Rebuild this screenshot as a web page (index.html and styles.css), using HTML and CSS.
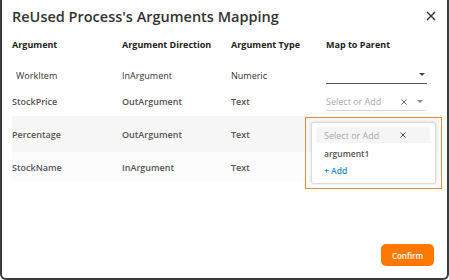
FILE: index.html
```html
<!DOCTYPE html>
<html lang="en">
<head>
  <meta charset="UTF-8" />
  <title>Arguments Mapping</title>
  <link rel="stylesheet" href="styles.css">
</head>
<body>

  <div class="dialog">
    <div class="dialog-header">
      <h2>ReUsed Process's Arguments Mapping</h2>
      <svg class="close" width="10" height="10" viewBox="0 0 10 10">
        <path d="M1 1 L9 9 M9 1 L1 9" stroke="#333" stroke-width="1.4" fill="none"/>
      </svg>
    </div>

    <div class="grid">
      <div class="row head">
        <div>Argument</div>
        <div>Argument Direction</div>
        <div>Argument Type</div>
        <div>Map to Parent</div>
      </div>

      <div class="row first">
        <div class="indent">WorkItem</div>
        <div>InArgument</div>
        <div>Numeric</div>
        <div>
          <div class="select dark">
            <span class="value"></span>
            <span class="caret"></span>
          </div>
        </div>
      </div>

      <div class="row small">
        <div>StockPrice</div>
        <div>OutArgument</div>
        <div>Text</div>
        <div>
          <div class="select">
            <span class="value placeholder">Select or Add</span>
            <svg class="clear" width="6" height="6" viewBox="0 0 6 6">
              <path d="M0.5 0.5 L5.5 5.5 M5.5 0.5 L0.5 5.5" stroke="#666" stroke-width="1" fill="none"/>
            </svg>
            <span class="caret light-caret"></span>
          </div>
        </div>
      </div>

      <div class="row small shaded">
        <div>Percentage</div>
        <div>OutArgument</div>
        <div>Text</div>
        <div></div>
      </div>

      <div class="row small light">
        <div>StockName</div>
        <div>InArgument</div>
        <div>Text</div>
        <div></div>
      </div>
    </div>

    <div class="dropdown">
      <div class="menu">
        <div class="search">
          <span>Select or Add</span>
          <svg width="6" height="6" viewBox="0 0 6 6">
            <path d="M0.5 0.5 L5.5 5.5 M5.5 0.5 L0.5 5.5" stroke="#555" stroke-width="1" fill="none"/>
          </svg>
        </div>
        <div class="option">argument1</div>
        <div class="option add">+ Add</div>
      </div>
    </div>

    <div class="footer">
      <button>Confirm</button>
    </div>
  </div>

</body>
</html>
```

FILE: styles.css
```css
body {
  margin: 0;
  font-family: "Open Sans", sans-serif;
  background-color: #fff;
}

.dialog {
  position: relative;
  width: 449px;
  height: 280px;
  box-sizing: border-box;
  border: 2px solid #3a3a3a;
  border-top: none;
  border-radius: 0 0 6px 6px;
  background-color: white;
  display: flex;
  flex-direction: column;
}

.dialog-header {
  display: flex;
  justify-content: space-between;
  align-items: center;
  height: 32px;
  padding: 0 11px 0 10px;
}

h2 {
  margin: 0;
  font-size: 14.5px;
  font-weight: 600;
  color: #333;
}

.grid {
  padding: 0 8px 0 8px;
}

.row {
  display: grid;
  grid-template-columns: 110px 109px 95px 1fr;
  align-items: center;
  padding-left: 2px;
  font-size: 9px;
  font-weight: 600;
  color: #555;
}

.row.head {
  height: 24px;
  font-size: 9px;
  font-weight: 700;
  color: #222;
}

.row.first {
  height: 34px;
  font-weight: 400;
  color: #333;
  padding-top: 4px;
  box-sizing: border-box;
}

.row.first .indent {
  padding-left: 4px;
}

.row.small {
  height: 22px;
}

.row.shaded {
  height: 36px;
  margin-top: 4px;
  margin-left: 2px;
  padding-left: 0;
  background-color: #f7f7f7;
}

.row.light {
  height: 30px;
  margin-left: 2px;
  padding-left: 0;
  background-color: #fcfcfc;
}

.select {
  display: flex;
  align-items: center;
  width: 99px;
  height: 16px;
  border-bottom: 1px solid #d4d4d4;
  margin-top: 2px;
}

.select.dark {
  width: 101px;
  border-bottom: 1px solid #555;
  margin-top: 0;
}

.select .value {
  flex: 1;
  font-weight: 400;
}

.placeholder {
  color: #aaa;
}

.select .clear {
  margin-right: 10px;
}

.caret {
  width: 0;
  height: 0;
  border-left: 3px solid transparent;
  border-right: 3px solid transparent;
  border-top: 3px solid #444;
  margin-right: 2px;
}

.light-caret {
  border-top-color: #888;
}

.dropdown {
  position: absolute;
  left: 303px;
  top: 117px;
  width: 137px;
  height: 72px;
  box-sizing: border-box;
  border: 1.5px solid #f0883c;
  padding: 4px 5px;
}

.menu {
  height: 100%;
  box-sizing: border-box;
  border: 1px solid #ddd;
  border-radius: 3px;
  box-shadow: 0 0 3px rgba(0,0,0,0.15);
  background-color: white;
  padding: 4px 5px;
}

.search {
  display: flex;
  justify-content: space-between;
  align-items: center;
  height: 16px;
  padding: 0 24px 0 7px;
  background-color: #f5f5f5;
  font-size: 9px;
  color: #aaa;
}

.option {
  font-size: 8.5px;
  font-weight: 600;
  color: #555;
  padding: 5px 0 0 7px;
  height: 13px;
}

.option.add {
  color: #1a8fd8;
  padding-top: 4px;
}

.footer {
  margin-top: auto;
  display: flex;
  justify-content: flex-end;
  padding: 0 13px 12px 0;
}

button {
  width: 53px;
  height: 22px;
  background-color: #ff7800;
  color: white;
  border: none;
  border-radius: 5px;
  font-family: "Open Sans", sans-serif;
  font-size: 8px;
  font-weight: 600;
  cursor: pointer;
}
```
